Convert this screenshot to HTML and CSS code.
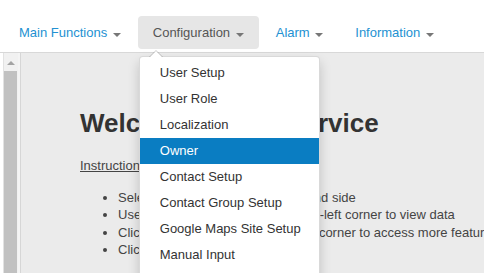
FILE: index.html
```html
<!DOCTYPE html>
<html lang="en">
<head>
    <meta charset="UTF-8">
    <meta name="viewport" content="width=device-width, initial-scale=1.0">
    <title>Welcome</title>
    <link rel="stylesheet" href="styles.css">
</head>
<body>
    <nav class="topnav">
        <ul class="nav-list">
            <li class="nav-item">
                <a href="#" class="nav-link">Main Functions <span class="caret"></span></a>
            </li>
            <li class="nav-item open">
                <a href="#" class="nav-link">Configuration <span class="caret"></span></a>
                <ul class="dropdown">
                    <li><a href="#">User Setup</a></li>
                    <li><a href="#">User Role</a></li>
                    <li><a href="#">Localization</a></li>
                    <li class="selected"><a href="#">Owner</a></li>
                    <li><a href="#">Contact Setup</a></li>
                    <li><a href="#">Contact Group Setup</a></li>
                    <li><a href="#">Google Maps Site Setup</a></li>
                    <li><a href="#">Manual Input</a></li>
                </ul>
            </li>
            <li class="nav-item">
                <a href="#" class="nav-link">Alarm <span class="caret"></span></a>
            </li>
            <li class="nav-item">
                <a href="#" class="nav-link">Information <span class="caret"></span></a>
            </li>
        </ul>
    </nav>

    <div class="main">
        <div class="gutter"></div>
        <div class="scrollbar">
            <div class="scroll-btn"><span class="scroll-arrow"></span></div>
            <div class="scroll-thumb"></div>
        </div>
        <div class="divider"></div>

        <div class="content">
            <h1 class="welcome">Welcome to Our Service</h1>
            <p class="intro"><u>Instructions:</u></p>
            <ul class="steps">
                <li>Select a site from the list at left-hand side</li>
                <li>Use the navigation menu at the top-left corner to view data</li>
                <li>Click the user icon on the top-right corner to access more features</li>
                <li>Click Logout to sign out</li>
            </ul>
        </div>
    </div>
</body>
</html>
```

FILE: styles.css
```css
* {
    margin: 0;
    padding: 0;
    box-sizing: border-box;
    font-family: 'Liberation Sans', Arial, Helvetica, sans-serif;
}

html, body {
    height: 100%;
    overflow: hidden;
}

body {
    background: #fff;
    font-size: 13px;
    color: #444;
}

a {
    text-decoration: none;
}

/* top navigation */
.topnav {
    background: #fff;
    border-bottom: 1px solid #d8d8d8;
    padding: 16px 0 3px 4px;
}

.nav-list {
    list-style: none;
    display: flex;
    gap: 2px;
}

.nav-item {
    position: relative;
}

.nav-link {
    display: block;
    padding: 0 15px;
    line-height: 33px;
    border-radius: 4px;
    color: #2391d2;
}

.nav-item.open .nav-link {
    background: #e6e6e6;
    color: #555;
}

.caret {
    display: inline-block;
    width: 0;
    height: 0;
    margin: 2px 0 0 2px;
    vertical-align: middle;
    border-top: 4px solid #777;
    border-left: 4px solid transparent;
    border-right: 4px solid transparent;
}

/* dropdown */
.dropdown {
    position: absolute;
    top: calc(100% + 7px);
    left: 1px;
    width: 181px;
    list-style: none;
    background: #fff;
    border: 1px solid rgba(0, 0, 0, 0.15);
    border-radius: 4px;
    box-shadow: 0 6px 12px rgba(0, 0, 0, 0.175);
    padding: 3px 0 20px;
    z-index: 10;
}

.dropdown::before,
.dropdown::after {
    content: '';
    position: absolute;
    border-left: 7px solid transparent;
    border-right: 7px solid transparent;
}

.dropdown::before {
    top: -7px;
    left: 9px;
    border-bottom: 7px solid rgba(0, 0, 0, 0.2);
}

.dropdown::after {
    top: -6px;
    left: 10px;
    border-left-width: 6px;
    border-right-width: 6px;
    border-bottom: 6px solid #fff;
}

.dropdown a {
    display: block;
    padding: 0 20px;
    line-height: 26px;
    color: #333;
    white-space: nowrap;
}

.dropdown .selected a {
    background: #0a7dc2;
    color: #fff;
}

/* page body */
.main {
    display: flex;
    height: calc(100% - 53px);
}

.gutter {
    width: 3px;
    background: #fff;
}

.scrollbar {
    width: 15px;
    display: flex;
    flex-direction: column;
    background: #f1f1f1;
    border-left: 1px solid #e2e2e2;
    padding-top: 2px;
}

.scroll-btn {
    height: 15px;
    display: flex;
    align-items: center;
    justify-content: center;
}

.scroll-arrow {
    width: 0;
    height: 0;
    border-bottom: 4px solid #a3a3a3;
    border-left: 4px solid transparent;
    border-right: 4px solid transparent;
}

.scroll-thumb {
    flex: 1;
    margin: 1px 1px 0 0;
    background: #c1c1c1;
}

.divider {
    width: 3px;
    background: #f4f4f4;
    border-right: 1px solid #d6d6d6;
}

.content {
    flex: 1;
    background: #ebebeb;
    padding: 56px 0 0 59px;
    overflow: hidden;
}

.welcome {
    font-size: 26px;
    line-height: 28px;
    font-weight: bold;
    color: #333;
    white-space: nowrap;
}

.intro {
    margin-top: 20px;
    line-height: 17.5px;
}

.steps {
    margin-top: 14px;
    padding-left: 38px;
    line-height: 17.5px;
}

.steps li {
    white-space: nowrap;
}
```
